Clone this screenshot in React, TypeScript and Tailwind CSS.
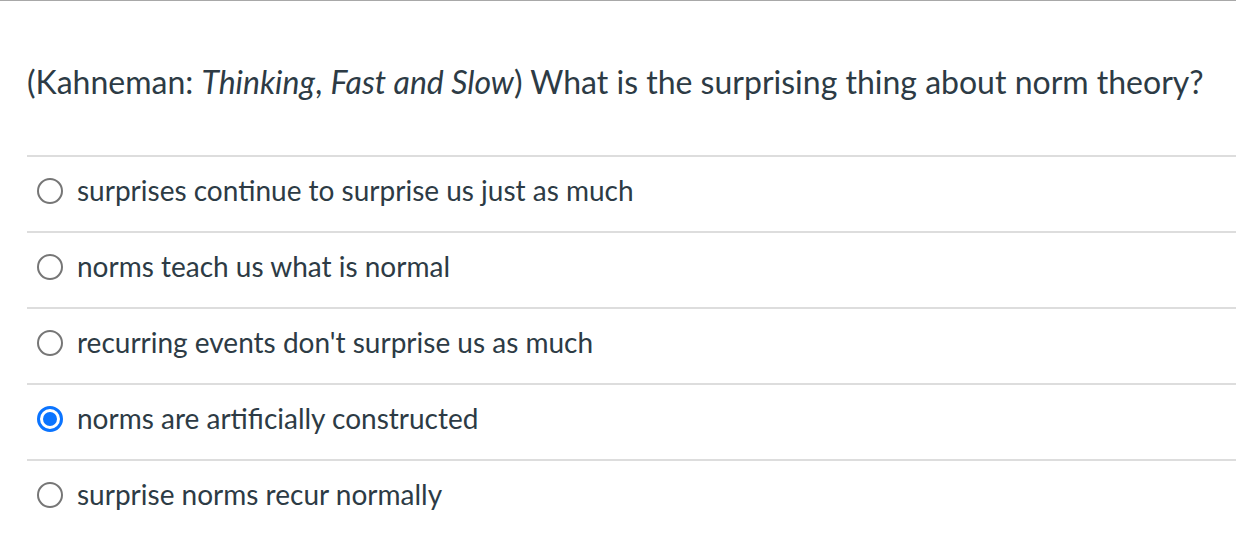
const options = [
  { id: 1, label: "surprises continue to surprise us just as much", checked: false },
  { id: 2, label: "norms teach us what is normal", checked: false },
  { id: 3, label: "recurring events don't surprise us as much", checked: false },
  { id: 4, label: "norms are artificially constructed", checked: true },
  { id: 5, label: "surprise norms recur normally", checked: false },
];

function Radio({ checked }: { checked: boolean }) {
  if (checked) {
    return (
      <span className="flex h-[26px] w-[26px] shrink-0 items-center justify-center rounded-full border-[3px] border-[#0b74ff] bg-white">
        <span className="h-[14px] w-[14px] rounded-full bg-[#0b74ff]"></span>
      </span>
    );
  }
  return <span className="h-[26px] w-[26px] shrink-0 rounded-full border-2 border-[#767676] bg-white"></span>;
}

export default function App() {
  return (
    <div className="h-[553px] w-full overflow-hidden border-t border-[#a8a8a8] bg-white font-['Lato',sans-serif] text-[#2d3b45]">
      <div className="pl-[27px]">
        <h1 className="pt-[61px] pb-[53px] text-[32px] leading-[40px]">
          (Kahneman: <em>Thinking</em>, <em>Fast and Slow</em>) What is the surprising thing about norm theory?
        </h1>
        <ul>
          {options.map((o) => (
            <li key={o.id} className="flex h-[76px] items-center gap-[14px] border-t-2 border-[#dddddd] pb-[6px] pl-[10px]">
              <Radio checked={o.checked} />
              <span className="mb-[3px] text-[28px] leading-none">{o.label}</span>
            </li>
          ))}
        </ul>
      </div>
    </div>
  );
}
